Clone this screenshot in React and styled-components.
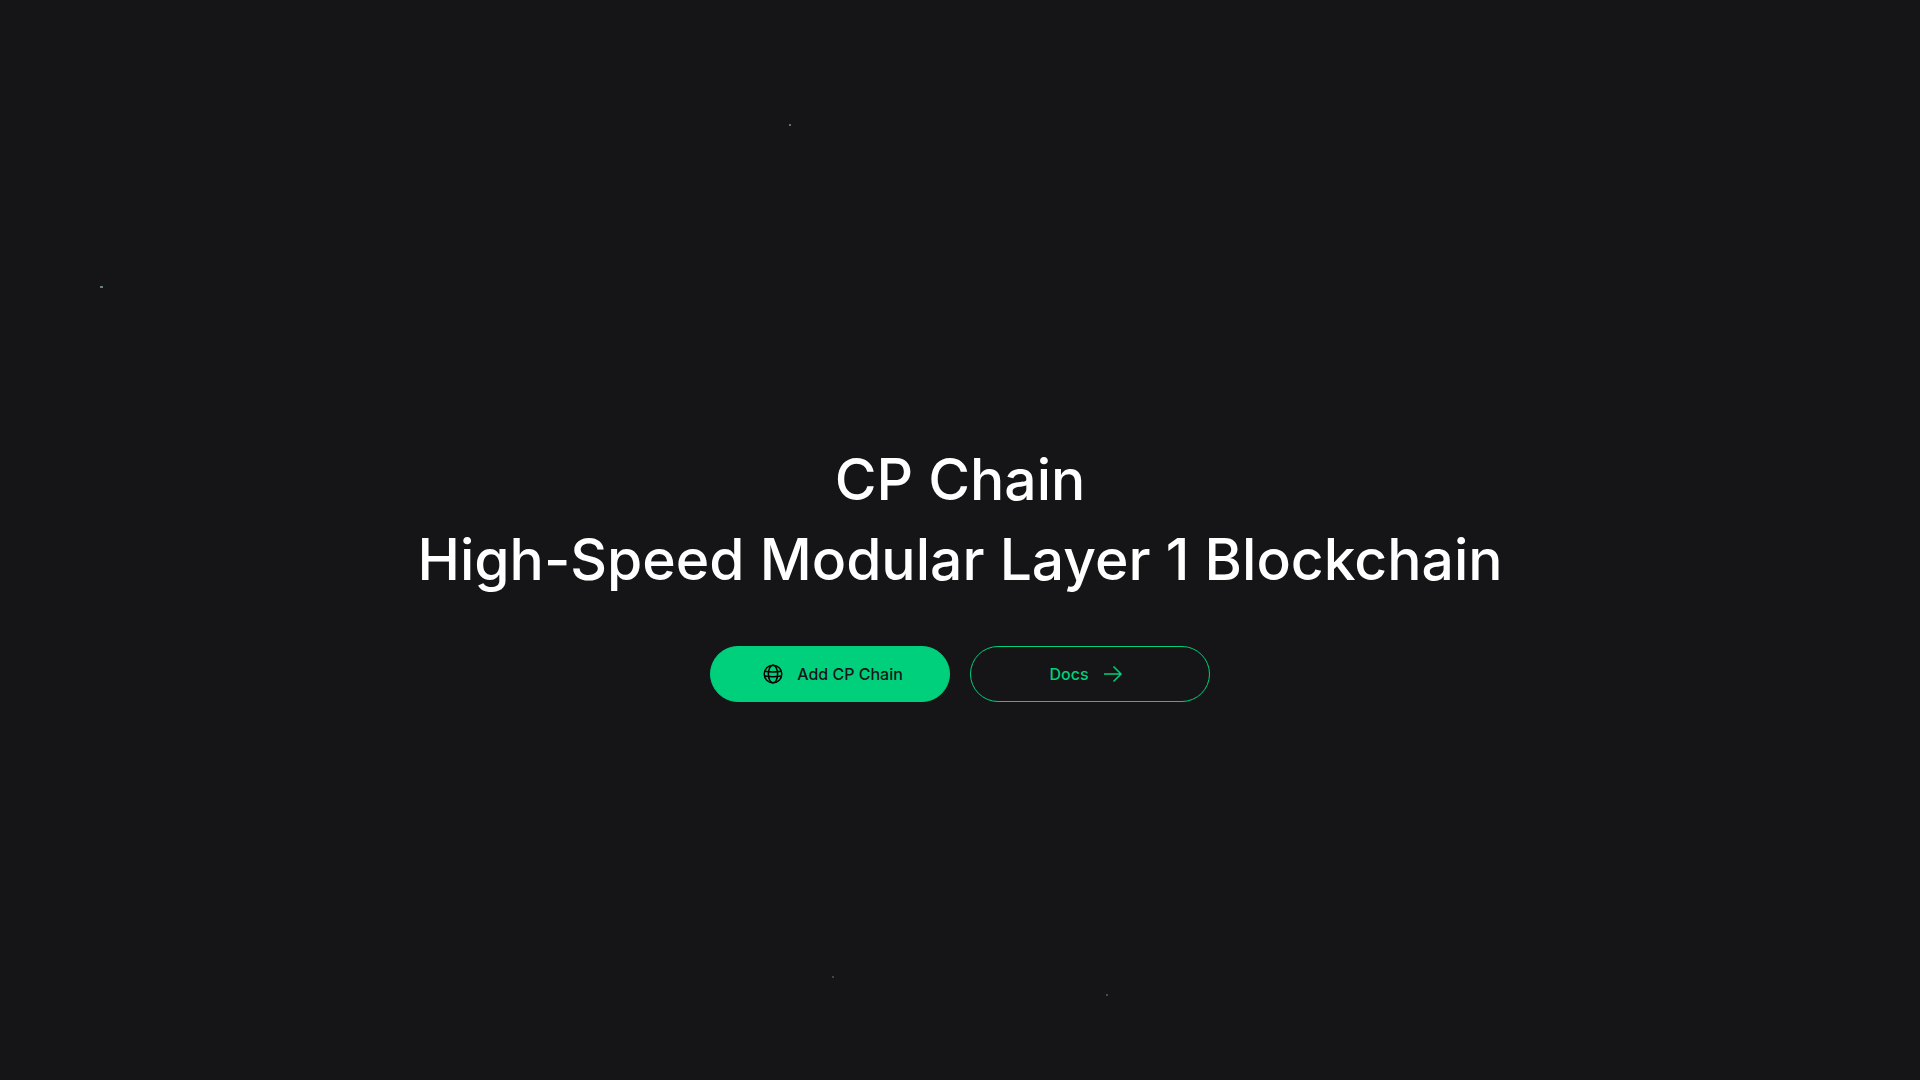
import React from "react";
import styled, { createGlobalStyle, css } from "styled-components";

const GlobalStyle = createGlobalStyle`
  *, *::before, *::after { box-sizing: border-box; }
  body {
    margin: 0;
    background: #151517;
    color: #fff;
    font-family: Inter, "Liberation Sans", sans-serif;
  }
`;

const Hero = styled.main`
  position: relative;
  min-height: 100vh;
  overflow: hidden;
  display: flex;
  flex-direction: column;
  align-items: center;
  justify-content: center;
  gap: 46px;
  padding: 62px 24px 0;
`;

const Title = styled.h1`
  margin: 0;
  font-size: 57px;
  line-height: 80px;
  font-weight: 500;
  text-align: center;
`;

const TitleLine = styled.span`
  display: block;
`;

const Actions = styled.div`
  display: flex;
  flex-wrap: wrap;
  justify-content: center;
  gap: 20px;
`;

const pill = css`
  display: flex;
  align-items: center;
  justify-content: center;
  gap: 12px;
  width: 240px;
  height: 56px;
  border: 1px solid #00d07b;
  border-radius: 28px;
  font: 500 16px/24px Inter, "Liberation Sans", sans-serif;
  cursor: pointer;
`;

const AddButton = styled.button`
  ${pill}
  padding: 0 0 0 4px;
  background: #00d07b;
  color: #161618;
`;

const DocsLink = styled.a`
  ${pill}
  padding: 0 6px 0 0;
  color: #00d07b;
  text-decoration: none;
`;

const Icon = styled.svg`
  width: 24px;
  height: 24px;
  flex: none;
  fill: none;
  stroke: ${(p) => p.$color};
  stroke-width: 1.5;
`;

const Star = styled.i`
  position: absolute;
  left: ${(p) => p.$x}%;
  top: ${(p) => p.$y}%;
  width: ${(p) => p.$w}px;
  height: 2px;
  background: ${(p) => p.$color};
`;

const stars = [
  { x: 41.1, y: 11.45, w: 2, color: "#66706f" },
  { x: 5.2, y: 26.5, w: 3, color: "#66827e" },
  { x: 43.33, y: 90.4, w: 2, color: "#444446" },
  { x: 57.6, y: 92, w: 2, color: "#4c4c4e" },
];

export default function App() {
  return (
    <>
      <GlobalStyle />
      <Hero>
        {stars.map((s) => (
          <Star key={s.x} $x={s.x} $y={s.y} $w={s.w} $color={s.color} aria-hidden="true" />
        ))}
        <Title>
          <TitleLine>CP Chain</TitleLine>
          <TitleLine>High-Speed Modular Layer 1 Blockchain</TitleLine>
        </Title>
        <Actions>
          <AddButton type="button">
            <Icon viewBox="0 0 24 24" $color="#000" aria-hidden="true">
              <circle cx="12" cy="12" r="8.8" />
              <ellipse cx="12" cy="12" rx="4.6" ry="8.8" />
              <path d="M3.7 9.2Q12 10.8 20.3 9.2M3.5 14Q12 15.6 20.5 14" />
            </Icon>
            Add CP Chain
          </AddButton>
          <DocsLink href="#docs">
            Docs
            <Icon viewBox="0 0 24 24" $color="#00d07b" aria-hidden="true">
              <path d="M3 12H20M12.5 4.5L20 12L12.5 19.5" />
            </Icon>
          </DocsLink>
        </Actions>
      </Hero>
    </>
  );
}
